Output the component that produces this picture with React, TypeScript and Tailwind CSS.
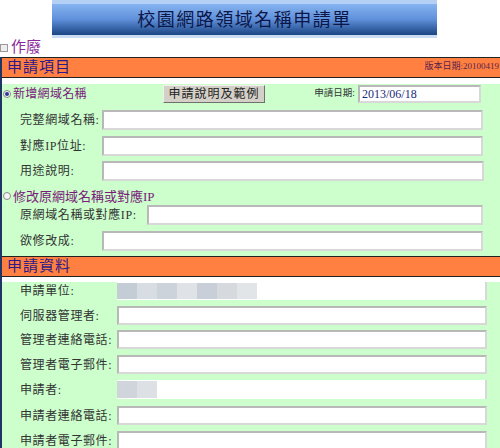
import React from 'react';

const font = "font-['Liberation_Serif','Noto_Sans_CJK_TC',serif]";

function Field({ className = '', value }: { className?: string; value?: string }) {
  return (
    <div className={`h-full bg-white border-2 border-t-[#b8b8b8] border-l-[#b8b8b8] border-r-[#d8d8d8] border-b-[#d8d8d8] text-[12px] leading-none text-[#1a2a7a] flex items-center px-[2px] ${className}`}>
      {value}
    </div>
  );
}

function Radio({ checked }: { checked?: boolean }) {
  return (
    <span className="inline-flex w-[8px] h-[8px] rounded-full border border-[#8a8a8a] bg-[#f4f4f4] items-center justify-center mr-[2px]">
      {checked && <span className="w-[4px] h-[4px] rounded-full bg-[#2a3a9a]" />}
    </span>
  );
}

function SectionHeader({ title, right }: { title: string; right?: string }) {
  return (
    <div className="h-[21px] border-y border-[#222] bg-[#ff8040] flex items-center justify-between pl-[5px] pr-[1px]">
      <span className="text-[15px] tracking-[1px] text-[#2a1a8a] leading-none">{title}</span>
      {right && <span className="text-[9px] text-[#5a2050] leading-none -mt-[3px] whitespace-nowrap">{right}</span>}
    </div>
  );
}

function Row({ label, labelW, inputW, mt, h = 'h-[20px]', children }: { label: string; labelW: string; inputW: string; mt: string; h?: string; children?: React.ReactNode }) {
  return (
    <div className={`flex items-center ${h} ${mt}`}>
      <span className={`${labelW} shrink-0 pl-[18px] text-[12px] tracking-[0.6px] text-[#333] leading-none`}>{label}</span>
      <div className={`${inputW} h-full`}>{children ?? <Field />}</div>
    </div>
  );
}

function Blur({ blocks }: { blocks: string[] }) {
  return (
    <div className="h-full bg-white border-r-2 border-[#d8d8d8] flex items-stretch py-[1px]">
      {blocks.map((c, i) => (
        <span key={i} className={`w-[20px] ${c}`} />
      ))}
    </div>
  );
}

export default function App() {
  return (
    <div className={`w-[500px] h-[448px] overflow-hidden bg-white ${font}`}>
      <div className="ml-[52px] w-[385px] h-[38px] flex flex-col">
        <div className="h-[4px] bg-[#b4d0f4]" />
        <div className="h-[31px] bg-gradient-to-b from-[#86b4f0] via-[#5f8fda] to-[#1b4684] flex items-center justify-center">
          <span className="text-[18px] tracking-[1.5px] text-[#0c1748] leading-none">校園網路領域名稱申請單</span>
        </div>
        <div className="h-[3px] bg-[#c8dcf4]" />
      </div>

      <div className="h-[19px] flex items-center">
        <span className="w-[8px] h-[8px] border border-[#9a9a9a] bg-[#eeeeee] mr-[3px]" />
        <span className="text-[15px] text-[#8a2a9a] leading-none">作廢</span>
      </div>

      <div className="w-[500px] border-l-2 border-[#1e3566]">
        <SectionHeader title="申請項目" right="版本日期:20100419" />
        <div className="bg-[#ccffcc] pb-[5px]">
          <div className="flex items-center h-[20px] mt-[6px]">
            <div className="w-[161px] flex items-center pl-[1px]">
              <Radio checked />
              <span className="text-[12px] tracking-[0.3px] text-[#7a1a7a] leading-none">新增網域名稱</span>
            </div>
            <div className="w-[102px] h-[18px] bg-[#d4d0c8] border border-t-[#f0f0f0] border-l-[#f0f0f0] border-r-[#707070] border-b-[#707070] flex items-center justify-center text-[12px] tracking-[1px] text-[#222] leading-none">
              申請說明及範例
            </div>
            <span className="w-[93px] text-right pr-[3px] text-[9.5px] text-[#333] leading-none">申請日期:</span>
            <div className="w-[123px] h-[18px]">
              <Field value="2013/06/18" />
            </div>
          </div>
          <Row label="完整網域名稱:" labelW="w-[100px]" inputW="w-[381px]" mt="mt-[6px]" />
          <Row label="對應IP位址:" labelW="w-[100px]" inputW="w-[381px]" mt="mt-[6px]" />
          <Row label="用途說明:" labelW="w-[100px]" inputW="w-[382px]" mt="mt-[5px]" />
          <div className="flex items-center h-[16px] mt-[7px] pl-[1px]">
            <Radio />
            <span className="text-[13px] text-[#7a1a7a] leading-none">修改原網域名稱或對應IP</span>
          </div>
          <Row label="原網域名稱或對應IP:" labelW="w-[145px]" inputW="w-[336px]" mt="mt-[1px]" />
          <Row label="欲修改成:" labelW="w-[100px]" inputW="w-[381px]" mt="mt-[6px]" />
        </div>

        <SectionHeader title="申請資料" />
        <div className="bg-[#ccffcc] pb-[6px]">
          <Row label="申請單位:" labelW="w-[115px]" inputW="w-[370px]" mt="mt-[5px]" h="h-[18px]">
            <Blur blocks={['bg-[#c4ccd6]', 'bg-[#d8dde3]', 'bg-[#cdd3da]', 'bg-[#dfe2e6]', 'bg-[#c8cfd8]', 'bg-[#d6dadf]', 'bg-[#e2e5e8]']} />
          </Row>
          <Row label="伺服器管理者:" labelW="w-[115px]" inputW="w-[370px]" mt="mt-[6px]" h="h-[19px]" />
          <Row label="管理者連絡電話:" labelW="w-[115px]" inputW="w-[370px]" mt="mt-[5px]" h="h-[19px]" />
          <Row label="管理者電子郵件:" labelW="w-[115px]" inputW="w-[370px]" mt="mt-[6px]" h="h-[19px]" />
          <Row label="申請者:" labelW="w-[115px]" inputW="w-[370px]" mt="mt-[6px]" h="h-[19px]">
            <Blur blocks={['bg-[#d0d5dc]', 'bg-[#dde0e5]']} />
          </Row>
          <Row label="申請者連絡電話:" labelW="w-[115px]" inputW="w-[370px]" mt="mt-[7px]" h="h-[19px]" />
          <Row label="申請者電子郵件:" labelW="w-[115px]" inputW="w-[370px]" mt="mt-[6px]" h="h-[19px]" />
        </div>
      </div>
    </div>
  );
}
